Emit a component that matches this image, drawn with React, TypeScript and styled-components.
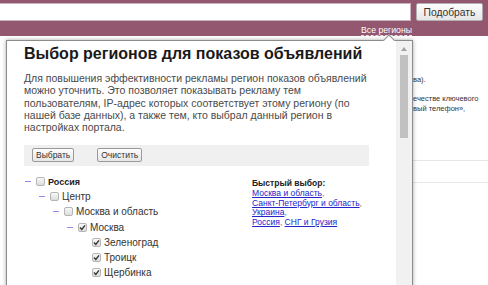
import React from "react";
import styled, { createGlobalStyle } from "styled-components";

const GlobalStyle = createGlobalStyle`
  html, body { margin: 0; padding: 0; background: #fff; }
  body { font-family: "Liberation Sans", Arial, sans-serif; }
`;

const Page = styled.div`
  position: relative;
  width: 488px;
  height: 285px;
  overflow: hidden;
  background: #fff;
`;

const Header = styled.header`
  background: #93586f;
  height: 36px;
  padding-top: 3px;
  box-sizing: border-box;
  display: flex;
  flex-direction: column;
`;

const SearchRow = styled.div`
  display: flex;
  gap: 5px;
  height: 19px;
  padding-right: 5px;
`;

const SearchInput = styled.div`
  flex: 1;
  margin-left: -2px;
  background: #fff;
  border: 1px solid #c9b3bc;
`;

const SearchButton = styled.button`
  width: 67px;
  padding: 0;
  font-family: "Liberation Sans", Arial, sans-serif;
  font-size: 10.3px;
  color: #333;
  background: linear-gradient(#fdfdfd, #e6e6e6);
  border: 1px solid #b0b0b0;
  border-radius: 2px;
`;

const RegionsRow = styled.div`
  display: flex;
  justify-content: flex-end;
  padding-right: 76px;
  margin-top: 4px;
`;

const RegionsLink = styled.span`
  color: #fff;
  font-size: 8.7px;
  line-height: 10px;
  border-bottom: 1px dashed #e8dde1;
`;

const Background = styled.div`
  display: flex;
  flex-direction: column;
  padding-left: 413px;
  padding-top: 39px;
  font-size: 7.5px;
  color: #333;
`;

const BgLine = styled.div<{ $gap?: number }>`
  margin-top: ${(p) => p.$gap ?? 0}px;
  line-height: 10px;
  white-space: nowrap;
`;

const BgRule = styled.div<{ $gap: number }>`
  margin-top: ${(p) => p.$gap}px;
  border-top: 1px solid #e6e6e6;
`;

const Popup = styled.div`
  position: absolute;
  left: 6px;
  top: 40px;
  width: 407px;
  height: 260px;
  box-sizing: border-box;
  background: #fff;
  border: 1px solid #8c8c8c;
  box-shadow: 0 0 4px rgba(0, 0, 0, 0.35);
  display: flex;
`;

const Caret = styled.div`
  position: absolute;
  left: 378px;
  top: -5px;
  width: 7px;
  height: 7px;
  background: #fff;
  border-left: 1px solid #8c8c8c;
  border-top: 1px solid #8c8c8c;
  transform: rotate(45deg);
`;

const Content = styled.div`
  flex: 1;
  min-width: 0;
  padding: 0 20px 0 17px;
  color: #222;
`;

const Title = styled.h1`
  margin: 2.5px 0 0;
  font-size: 16px;
  line-height: 20px;
  font-weight: bold;
  color: #1a1a1a;
  white-space: nowrap;
`;

const Intro = styled.p`
  width: 350px;
  margin: 8.5px 0 0;
  font-size: 10.5px;
  line-height: 12.3px;
  color: #4a4a4a;
`;

const Toolbar = styled.div`
  width: 337px;
  margin-top: 11.5px;
  height: 21px;
  background: #f0f0f0;
  display: flex;
  align-items: center;
  gap: 23px;
  padding-left: 8px;
`;

const ToolButton = styled.button`
  height: 14px;
  padding: 0 3px;
  font-family: "Liberation Sans", Arial, sans-serif;
  font-size: 8.5px;
  line-height: 12px;
  color: #333;
  background: linear-gradient(#fdfdfd, #e6e6e6);
  border: 1px solid #9a9a9a;
  border-radius: 2px;
`;

const Body = styled.div`
  display: flex;
  margin-top: 8px;
`;

const Tree = styled.div`
  width: 228px;
  display: flex;
  flex-direction: column;
`;

const Row = styled.div<{ $level: number }>`
  display: flex;
  align-items: center;
  height: 15.2px;
  padding-left: ${(p) => 1 + p.$level * 14}px;
  font-size: 10px;
  color: #333;
`;

const Dash = styled.span<{ $hidden?: boolean }>`
  width: 6px;
  height: 1px;
  background: ${(p) => (p.$hidden ? "transparent" : "#8e8ce6")};
  margin-right: 5px;
`;

const Box = styled.span`
  width: 7px;
  height: 7px;
  border: 1px solid #b5b5b5;
  border-radius: 2px;
  background: linear-gradient(#f8f8f8, #dcdcdc);
  display: flex;
  align-items: center;
  justify-content: center;
  margin-right: 3px;
  flex: none;
`;

const Label = styled.span<{ $bold?: boolean }>`
  font-weight: ${(p) => (p.$bold ? "bold" : "normal")};
  font-size: ${(p) => (p.$bold ? "9px" : "10px")};
  color: ${(p) => (p.$bold ? "#222" : "#333")};
`;

const Quick = styled.div`
  display: flex;
  flex-direction: column;
  padding-top: 5px;
  font-size: 8.5px;
  line-height: 9.8px;
  color: #777;
`;

const QuickTitle = styled.div`
  font-weight: bold;
  color: #222;
`;

const Link = styled.a`
  color: #2424c8;
  text-decoration: underline;
`;

const Scrollbar = styled.div`
  width: 16px;
  background: #f1f1f1;
  display: flex;
  flex-direction: column;
  align-items: center;
`;

const ScrollArrow = styled.div`
  height: 12px;
  display: flex;
  align-items: center;
  justify-content: center;
  margin-top: 2px;
`;

const Thumb = styled.div`
  width: 8px;
  height: 83px;
  background: #c1c1c1;
`;

const Check = () => (
  <svg width="7" height="7" viewBox="0 0 7 7">
    <path d="M1 3.6 L2.8 5.4 L6 1.4" fill="none" stroke="#333" strokeWidth="1.4" />
  </svg>
);

const CheckBox = ({ checked }: { checked?: boolean }) => <Box>{checked ? <Check /> : null}</Box>;

const tree = [
  { level: 0, label: "Россия", bold: true, checked: false, dash: true },
  { level: 1, label: "Центр", checked: false, dash: true },
  { level: 2, label: "Москва и область", checked: false, dash: true },
  { level: 3, label: "Москва", checked: true, dash: true },
  { level: 4, label: "Зеленоград", checked: true, dash: false },
  { level: 4, label: "Троицк", checked: true, dash: false },
  { level: 4, label: "Щербинка", checked: true, dash: false },
];

export default function App() {
  return (
    <>
      <GlobalStyle />
      <Page>
        <Header>
          <SearchRow>
            <SearchInput />
            <SearchButton>Подобрать</SearchButton>
          </SearchRow>
          <RegionsRow>
            <RegionsLink>Все регионы</RegionsLink>
          </RegionsRow>
        </Header>
        <Background>
          <BgLine $gap={0}>ва).</BgLine>
          <BgLine $gap={9}>ечестве ключевого</BgLine>
          <BgLine>вый телефон»,</BgLine>
          <BgRule $gap={46} />
          <BgRule $gap={21} />
        </Background>
        <Popup>
          <Caret />
          <Content>
            <Title>Выбор регионов для показов объявлений</Title>
            <Intro>
              Для повышения эффективности рекламы регион показов объявлений можно уточнить. Это позволяет
              показывать рекламу тем пользователям, IP-адрес которых соответствует этому региону (по нашей
              базе данных), а также тем, кто выбрал данный регион в настройках портала.
            </Intro>
            <Toolbar>
              <ToolButton>Выбрать</ToolButton>
              <ToolButton>Очистить</ToolButton>
            </Toolbar>
            <Body>
              <Tree>
                {tree.map((t) => (
                  <Row key={t.label} $level={t.level}>
                    <Dash $hidden={!t.dash} />
                    <CheckBox checked={t.checked} />
                    <Label $bold={t.bold}>{t.label}</Label>
                  </Row>
                ))}
              </Tree>
              <Quick>
                <QuickTitle>Быстрый выбор:</QuickTitle>
                <span>
                  <Link>Москва и область</Link>,
                </span>
                <span>
                  <Link>Санкт-Петербург и область</Link>,
                </span>
                <span>
                  <Link>Украина</Link>,
                </span>
                <span>
                  <Link>Россия</Link>, <Link>СНГ и Грузия</Link>
                </span>
              </Quick>
            </Body>
          </Content>
          <Scrollbar>
            <ScrollArrow>
              <svg width="6" height="4" viewBox="0 0 6 4">
                <path d="M0 4 L3 0 L6 4 Z" fill="#a3a3a3" />
              </svg>
            </ScrollArrow>
            <Thumb />
          </Scrollbar>
        </Popup>
      </Page>
    </>
  );
}
